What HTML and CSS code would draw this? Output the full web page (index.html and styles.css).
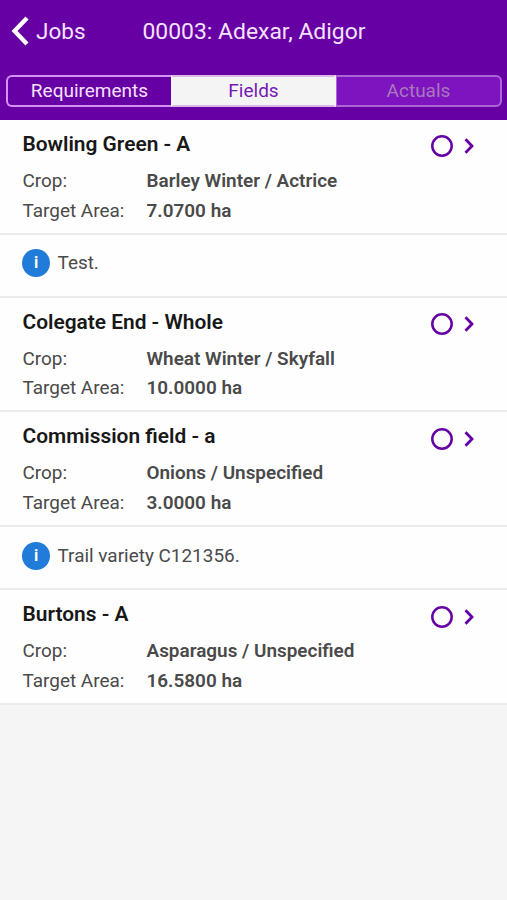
FILE: index.html
```html
<!DOCTYPE html>
<html lang="en">
<head>
<meta charset="utf-8">
<title>Jobs</title>
<link rel="stylesheet" href="styles.css">
</head>
<body>
<svg class="defs" aria-hidden="true">
  <symbol id="status" viewBox="0 0 46 24">
    <circle cx="12" cy="12" r="9.7" fill="none" stroke="currentColor" stroke-width="2.5"/>
    <path d="M35.500 5.200 42 12l-6.500 6.800" fill="none" stroke="currentColor" stroke-width="2.8"/>
  </symbol>
</svg>
<header class="header">
  <div class="bar">
    <a class="back"><svg class="chevron" viewBox="0 0 18 30"><path d="M16 2 3.500 15 16 28" fill="none" stroke="currentColor" stroke-width="4.300"/></svg><span>Jobs</span></a>
    <h1 class="title">00003: Adexar, Adigor</h1>
  </div>
  <nav class="tabs">
    <a class="tab">Requirements</a>
    <a class="tab active">Fields</a>
    <a class="tab disabled">Actuals</a>
  </nav>
</header>
<main class="list">
  <section class="field">
    <h2 class="name">Bowling Green - A</h2>
    <svg class="status"><use href="#status"/></svg>
    <dl class="details"><dt>Crop:</dt><dd>Barley Winter / Actrice</dd><dt>Target Area:</dt><dd>7.0700 ha</dd></dl>
  </section>
  <p class="note"><span class="info">i</span><span>Test.</span></p>
  <section class="field">
    <h2 class="name">Colegate End - Whole</h2>
    <svg class="status"><use href="#status"/></svg>
    <dl class="details"><dt>Crop:</dt><dd>Wheat Winter / Skyfall</dd><dt>Target Area:</dt><dd>10.0000 ha</dd></dl>
  </section>
  <section class="field">
    <h2 class="name">Commission field - a</h2>
    <svg class="status"><use href="#status"/></svg>
    <dl class="details"><dt>Crop:</dt><dd>Onions / Unspecified</dd><dt>Target Area:</dt><dd>3.0000 ha</dd></dl>
  </section>
  <p class="note"><span class="info">i</span><span>Trail variety C121356.</span></p>
  <section class="field">
    <h2 class="name">Burtons - A</h2>
    <svg class="status"><use href="#status"/></svg>
    <dl class="details"><dt>Crop:</dt><dd>Asparagus / Unspecified</dd><dt>Target Area:</dt><dd>16.5800 ha</dd></dl>
  </section>
</main>
</body>
</html>
```
FILE: styles.css
```css
* { box-sizing: border-box; }
body { margin: 0; background: #f5f5f5; color: #4a4a4a; font: 18.930px/30px Roboto, sans-serif; }
h1, h2, p, dl, dd { margin: 0; }
.defs { display: none; }
.header { height: 120px; background: #6600a4; color: #f6e2ff; padding: 0 5px 0 6px; }
.bar { display: flex; height: 75px; align-items: center; padding-bottom: 13px; }
.back { display: flex; align-items: center; width: 136.500px; padding-left: 5px; font-size: 22.500px; }
.chevron { width: 18px; height: 30px; margin-right: 7px; color: #fff; }
.title { padding-top: 1px; font-size: 22.900px; font-weight: 400; white-space: nowrap; }
.tabs { display: grid; grid-template-columns: 165px 165px 1fr; height: 31.500px; }
.tab { border: 2px solid #d393f4; font-size: 19px; line-height: 27px; text-align: center; }
.tab:first-child { border-right: 0; border-radius: 6px 0 0 6px; }
.active { border-color: #d9b8e8 #f4f4f4; background: #f4f4f4; color: #7519b5; }
.disabled { border-color: #ac66d5; border-left-width: 1px; border-radius: 0 6px 6px 0; background: #7d14c0; color: #a978bd; }
.list { background: #fefefe; }
.field { display: grid; grid-template-columns: 1fr 46px; grid-template-rows: 30px 1fr; height: 114.600px; padding: 8.800px 31px 0 22.500px; border-bottom: 2px solid #ebebeb; }
.name { color: #181818; font-size: 20.900px; font-weight: 600; line-height: 30px; }
.status { width: 46px; height: 24px; margin-top: 5.600px; color: #6500a5; }
.details { grid-column: 1 / -1; display: grid; grid-template-columns: 124px 1fr; grid-auto-rows: 29.700px; margin-top: 7.200px; }
dd { font-weight: 600; }
.note { display: flex; align-items: center; height: 63.200px; padding: 0 22px 4px; border-bottom: 2px solid #ebebeb; }
.info { width: 28px; height: 28px; margin-right: 7.500px; border-radius: 50%; background: #207cd8; color: #fff; font-size: 16px; font-weight: 700; line-height: 28px; text-align: center; }
```
